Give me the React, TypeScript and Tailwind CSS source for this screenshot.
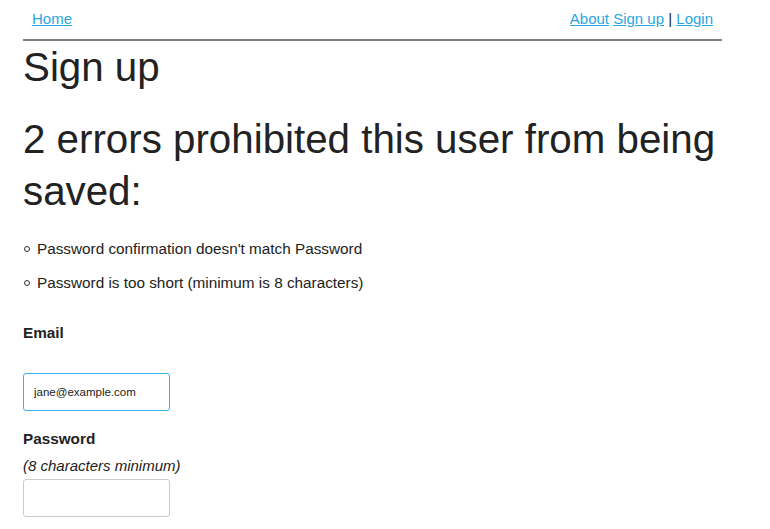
export default function App() {
  const font = { fontFamily: '"Liberation Sans", Arial, Helvetica, sans-serif' };
  return (
    <div className="min-h-screen bg-white text-[#222]" style={font}>
      <div className="ml-[23px] w-[699px]">
        <nav className="flex justify-between px-[9px] pt-[10px] h-[41px] border-b-2 border-[#808080] text-[15px] leading-[18px]">
          <a href="#" className="text-[#2aa6de] underline">Home</a>
          <div>
            <a href="#" className="text-[#2aa6de] underline">About</a>{" "}
            <a href="#" className="text-[#2aa6de] underline">Sign up</a>{" "}
            <span>|</span>{" "}
            <a href="#" className="text-[#2aa6de] underline">Login</a>
          </div>
        </nav>
        <h1 className="text-[40.3px] leading-[52px] m-0 mt-[1px]">Sign up</h1>
        <h2 className="text-[40.3px] leading-[52px] mt-[20px]">2 errors prohibited this user from being saved:</h2>
        <ul className="mt-[21px] text-[15.3px] leading-[20px]">
          <li className="flex items-center">
            <span className="inline-block w-[6px] h-[6px] rounded-full border border-[#333] ml-[1px] mr-[7px]"></span>
            Password confirmation doesn't match Password
          </li>
          <li className="flex items-center mt-[14px]">
            <span className="inline-block w-[6px] h-[6px] rounded-full border border-[#333] ml-[1px] mr-[7px]"></span>
            Password is too short (minimum is 8 characters)
          </li>
        </ul>
        <div className="mt-[30px] text-[15.3px] leading-[20px] font-bold">Email</div>
        <input
          type="text"
          defaultValue="jane@example.com"
          className="mt-[30px] block w-[147px] h-[38px] border border-[#35b5e5] rounded-[3px] px-[10px] text-[11.5px] text-[#222] outline-none"
          style={font}
        />
        <div className="mt-[18px] text-[15.3px] leading-[20px] font-bold">Password</div>
        <div className="mt-[7px] text-[15px] leading-[20px] italic">(8 characters minimum)</div>
        <input
          type="password"
          className="mt-[3px] block w-[147px] h-[38px] border border-[#cccccc] rounded-[3px] px-[10px] text-[11px] outline-none"
        />
      </div>
    </div>
  );
}
